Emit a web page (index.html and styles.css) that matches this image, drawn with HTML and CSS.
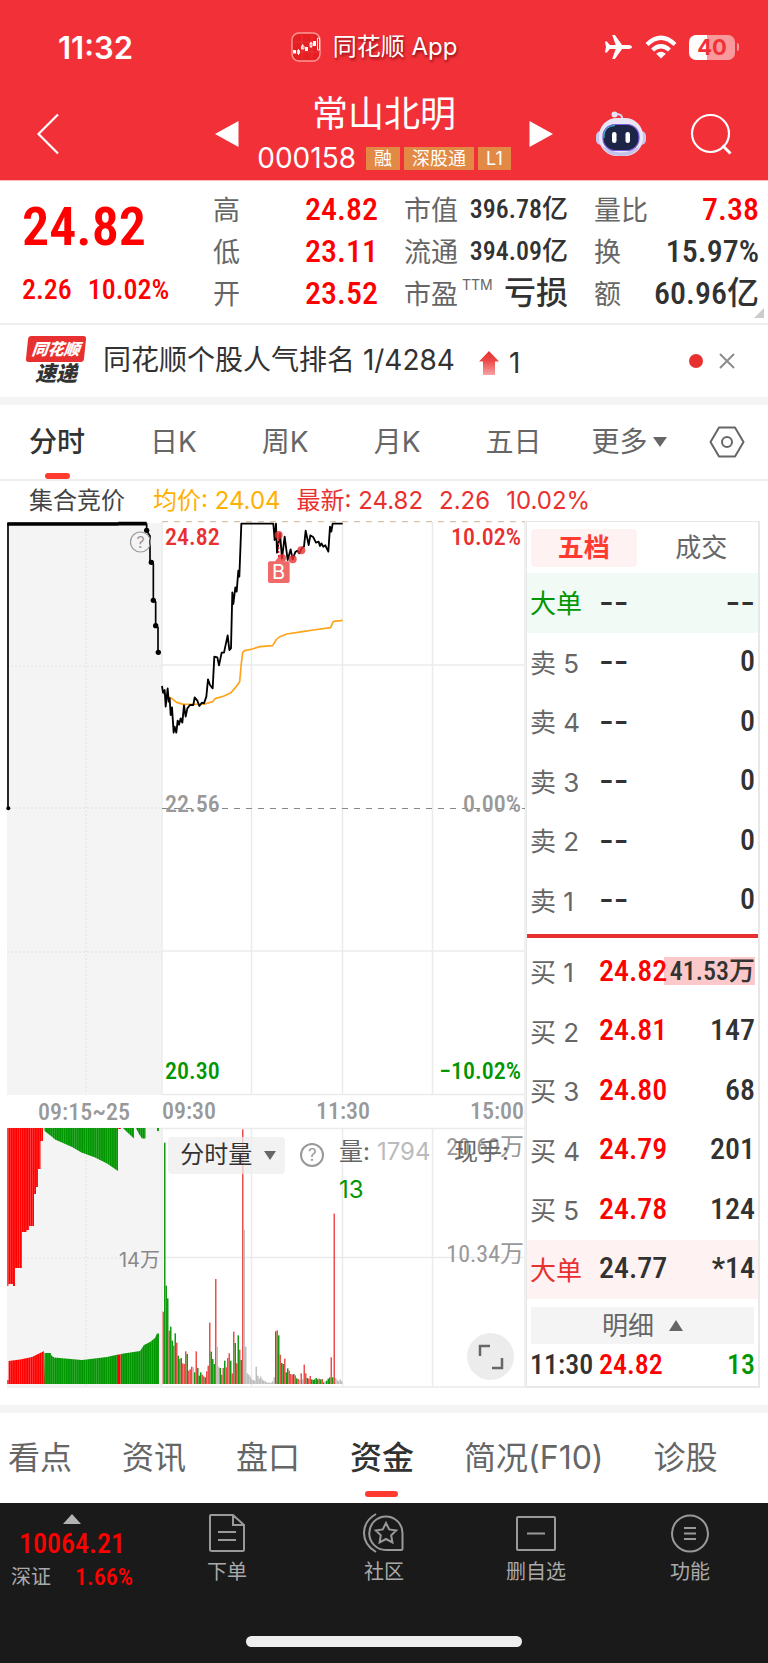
FILE: index.html
```html
<!DOCTYPE html>
<html lang="zh-CN">
<head>
<meta charset="utf-8">
<meta name="viewport" content="width=device-width, initial-scale=1">
<title>常山北明 000158</title>
<link rel="stylesheet" href="styles.css">
</head>
<body>
<header class="header">
  <div class="status">
    <time class="clock">11:32</time>
    <div class="app-tag">
      <svg class="app-icon" viewBox="0 0 30 30"><rect x="1" y="1" width="28" height="28" rx="7" fill="#e51f22" stroke="#ff9a98" stroke-width="1.4"/><path d="M1 10H29M1 20H29M11 1V29M21 1V29" stroke="#ee4446" stroke-width=".6"/><path d="M2 18h3v3.500h-3zM14 15h3v4h-3zM22 9h3v5h-3z" fill="#fff"/><path d="M6.500 18.500h2v3h-2zM7.500 17v6M10.500 14h2.500v3h-2.500zM11.700 12v5M19 11h2v3.500h-2zM20 10v6M26.500 6h2v12h-2z" fill="none" stroke="#fff" stroke-width=".9"/></svg>
      <span>同花顺 App</span>
    </div>
    <div class="signals">
      <svg class="plane" viewBox="0 0 28 26"><path fill="#fff" d="M27.500 13c0 1.300-1.800 2-3.600 2h-6.300l-7.200 10H7.700l3.500-10H5.300L2.400 18.500H.5L1.500 13 .5 7.500h1.900L5.300 11h5.900L7.700 1h2.700l7.200 10h6.300c1.800 0 3.600.7 3.600 2z"/></svg>
      <svg class="wifi" viewBox="0 0 32 24"><g fill="none" stroke="#fff" stroke-width="4.200"><path d="M2 9.500Q16-4 30 9.500"/><path d="M7.500 15q8.500-7.500 17 0"/></g><path fill="#fff" d="M16 23.500l-4.800-4.800q4.800-4 9.600 0z"/></svg>
      <span class="battery">40</span>
    </div>
  </div>
  <div class="title-bar">
    <div class="side side-left">
      <button class="icon-btn" aria-label="返回"><svg width="24" height="42" viewBox="0 0 24 42"><path d="M22 1.500L2.500 21 22 40.500" fill="none" stroke="#fff" stroke-width="2.200"/></svg></button>
      <button class="icon-btn" aria-label="上一只"><svg width="24" height="26" viewBox="0 0 24 26"><path d="M0 13L23.500 0v26z" fill="#fff"/></svg></button>
    </div>
    <div class="title">
      <h1 class="name">常山北明</h1>
      <div class="code-row"><span class="code">000158</span><span class="badge">融</span><span class="badge">深股通</span><span class="badge">L1</span></div>
    </div>
    <div class="side side-right">
      <button class="icon-btn" aria-label="下一只"><svg width="24" height="26" viewBox="0 0 24 26"><path d="M24 13L.5 0v26z" fill="#fff"/></svg></button>
      <button class="icon-btn" aria-label="智能助手"><svg width="50" height="46" viewBox="0 0 50 46"><path d="M26 9V6q-1-3-6-3" fill="none" stroke="#d9d6f0" stroke-width="2"/><circle cx="18.500" cy="3.500" r="3" fill="#e6e4f6"/><rect x="0" y="20" width="10" height="14" rx="5" fill="#c9c8ec"/><rect x="40" y="20" width="10" height="14" rx="5" fill="#c9c8ec"/><rect x="3" y="7" width="44" height="38" rx="18" fill="#e9e7f7"/><path d="M6 35q19 13 38 0-5 10-19 10T6 35z" fill="#c3c2e8"/><rect x="7" y="13.500" width="36" height="26" rx="12" fill="#1d2547" stroke="#7c5ce0" stroke-width="1.200"/><path d="M8 27V24q1-9 11-9.500" fill="none" stroke="#4bc6d8"/><rect x="16" y="21" width="4.500" height="11" rx="2.200" fill="#fff"/><rect x="29.500" y="21" width="4.500" height="11" rx="2.200" fill="#fff"/></svg></button>
      <button class="icon-btn" aria-label="搜索"><svg width="42" height="42" viewBox="0 0 42 42"><g fill="none" stroke="#fff" stroke-width="2.200"><circle cx="20.500" cy="20.500" r="18.500"/><path d="M32.500 32.500l8 8" stroke-width="3"/></g></svg></button>
    </div>
  </div>
</header>

<section class="quote">
  <div class="price-block">
    <strong class="price">24.82</strong>
    <div class="change"><span>2.26</span><span>10.02%</span></div>
  </div>
  <dl class="facts">
    <div><dt>高</dt><dd class="up">24.82</dd></div>
    <div><dt>低</dt><dd class="up">23.11</dd></div>
    <div><dt>开</dt><dd class="up">23.52</dd></div>
  </dl>
  <dl class="facts">
    <div><dt>市值</dt><dd class="small">396.78亿</dd></div>
    <div><dt>流通</dt><dd class="small">394.09亿</dd></div>
    <div><dt>市盈<span class="ttm">TTM</span></dt><dd>亏损</dd></div>
  </dl>
  <dl class="facts">
    <div><dt>量比</dt><dd class="up">7.38</dd></div>
    <div><dt>换</dt><dd>15.97%</dd></div>
    <div><dt>额</dt><dd>60.96亿</dd></div>
  </dl>
</section>

<section class="news">
  <div class="news-logo"><span class="logo-top">同花顺</span><span class="logo-bottom">速递</span></div>
  <a class="news-text" href="#rank">同花顺个股人气排名 1/4284</a>
  <svg class="arrow" width="20" height="24" viewBox="0 0 20 24"><defs><linearGradient id="fade" x2="0" y2="1"><stop stop-color="#e93030"/><stop offset=".4" stop-color="#ec4747"/><stop offset="1" stop-color="#f7a3a3"/></linearGradient></defs><path d="M10 0l10 10.500H16V24H4V10.500H0z" fill="url(#fade)"/></svg>
  <span class="news-rank">1</span>
  <span class="dot"></span>
  <button class="icon-btn" aria-label="关闭"><svg width="16" height="16" viewBox="0 0 16 16"><path d="M1 1l14 14M15 1L1 15" stroke="#8c8c8c" stroke-width="2"/></svg></button>
</section>

<nav class="periods">
  <button class="period active">分时</button>
  <button class="period">日K</button>
  <button class="period">周K</button>
  <button class="period">月K</button>
  <button class="period">五日</button>
  <button class="period more">更多<svg width="14" height="10" viewBox="0 0 14 10"><path d="M0 0h14L7 10z" fill="#666"/></svg></button>
  <button class="icon-btn settings" aria-label="设置"><svg width="36" height="32" viewBox="0 0 36 32"><g fill="none" stroke="#666" stroke-width="2"><path d="M10 1.500h16L34.500 16 26 30.500H10L1.500 16z" stroke-linejoin="round"/><circle cx="18" cy="16" r="5"/></g></svg></button>
</nav>

<div class="legend">
  <span class="auction">集合竞价</span><span class="avg">均价: 24.04</span><span class="last">最新: 24.82</span><span class="last">2.26</span><span class="last">10.02%</span>
</div>

<main class="board">
  <section class="chart">
    <svg class="plot" viewBox="0 521 526 867">
      <defs>
        <pattern id="red-bars" width="2.200" height="10" patternUnits="userSpaceOnUse"><rect width="2.200" height="10" fill="#ff5a5a"/><rect width="1.700" height="10" fill="#f00"/></pattern>
        <pattern id="green-bars" width="2.200" height="10" patternUnits="userSpaceOnUse"><rect width="2.200" height="10" fill="#4db34d"/><rect width="1.700" height="10" fill="#009600"/></pattern>
      </defs>
      <rect x="7" y="523" width="155" height="572" fill="#f4f4f4"/>
      <rect x="7" y="1128" width="155" height="258" fill="#f4f4f4"/>
      <g stroke="#e8e8e8" stroke-width="1.500" stroke-dasharray="2 2"><path d="M86 530V1095M7 666H162M7 808H162M7 952H162M86 1128V1386M7 1258H162"/></g>
      <g stroke="#ebebeb" stroke-width="1.500" fill="none"><path d="M162 522V1095M251.500 522V1094M342.500 522V1094M432.500 522V1094M525 522V1388M162 665H525M162 951H525M162 1094.500H525M7 1128.500H525M162 1129V1386M251.500 1129V1386M342.500 1129V1386M432.500 1129V1386M162 1257.500H525M7 1387H525"/></g>
      <path d="M162 521.600H525" stroke="#d9c3aa" stroke-width="1.200" stroke-dasharray="6 6"/>
      <path d="M162 808.500H525" stroke="#888" stroke-width="1.200" stroke-dasharray="6 6"/>

      <g transform="translate(0 400) scale(.33333)" fill="none" stroke-linejoin="round">
        <path d="M24 1225V371H436" stroke="#000" stroke-width="5"/>
        <path d="M22 372H355M355 371H440" stroke="#000" stroke-width="11"/>
        <path d="M440 370V392L450 408V486L460 492V600L467 606V677L474 682V757" stroke="#000" stroke-width="5"/>
        <g fill="#000"><circle cx="440" cy="391" r="8"/><circle cx="454" cy="487" r="8"/><circle cx="460" cy="601" r="8"/><circle cx="467" cy="677" r="8"/><circle cx="475" cy="757" r="8"/><circle cx="25" cy="1225" r="6"/></g>
        <path d="M489 880L505 890 515 895 530 907 550 913 615 912 638 905 645 896 672 888 693 878 706 863 719 845 724 790 728 758 734 752 757 747 780 740 818 737 828 720 838 711 860 702 908 695 940 690 992 683 998 668 1001 664 1028 661" stroke="#ffa31a" stroke-width="5"/>
        <path d="M486 858L489 878 494 870 497 920 503 865 506 905 509 895 512 945 516 922 521 998 524 980 529 998 533 962 537 974 542 955 547 968 552 916 557 950 562 925 570 915 580 915 584 892 592 902 598 918 606 908 612 910 619 890 624 838 630 855 638 865 643 770 652 772 657 796 665 758 672 758 683 706 688 750 693 745 697 577 700 612 706 562 710 575 715 512 718 530 724 371 820 371 824 420 828 371 831 458 840 400 846 475 854 410 863 480 872 448 878 478 886 456 892 452 898 460 905 445 912 440 917 392 926 435 931 406 940 412 948 428 956 425 960 438 964 430 970 440 976 436 985 455 990 380 994 395 998 371 1028 371" stroke="#000" stroke-width="5.500"/>
        <path d="M836 405V475" stroke="#e93030" stroke-width="4" stroke-dasharray="6 6"/>
        <g fill="#e93030" fill-opacity=".8"><circle cx="836" cy="405" r="12"/><circle cx="846" cy="474" r="12"/><circle cx="878" cy="478" r="12"/><circle cx="904" cy="451" r="12"/></g>
        <path d="M809 484H825L836 470 847 484H864Q869 484 869 489V544Q869 549 864 549H809Q804 549 804 544V489Q804 484 809 484z" fill="#f06a6a"/>
      </g>
      <text class="mark" x="278.500" y="579" text-anchor="middle">B</text>

      <g transform="translate(0 1070)">
        <path fill="url(#red-bars)" d="M7.300 58V216H8.500V214H13V216H15V198H22V162H26.500V160H29V156H34V124H36V117H38V99H40.500V71H43V58zM118 58h3v1h-3zM7.300 314V310H8.500V291L20 289.500 32 287 38 284 44 281 45 314z"/>
        <path fill="url(#green-bars)" d="M44.500 58V61L51 66 55 69.500 72 77 81.500 82.500 95 87.500 107 93.500 115 99 118 101V58zM123 58L128 63 134 68.500V58zM136 58L139 64 142 68.500H145.500V58zM157 58V61H159V58zM44.500 314V283H51V285L54 287.500 82 290 107 287 118 284.500V314zM120.500 314V284L127 283 140 281 144 275 150 272 155 268 157 263.500H159V314z"/>
        <rect x="118" y="284.500" width="2.500" height="29.500" fill="#f00"/>
      </g>
      <g id="volume"></g>

      <g class="num">
        <text x="165" y="545" fill="#e93030">24.82</text>
        <text x="521" y="545" fill="#e93030" text-anchor="end">10.02%</text>
        <text x="165" y="812" fill="#999">22.56</text>
        <text x="521" y="812" fill="#999" text-anchor="end">0.00%</text>
        <text x="165" y="1079" fill="#009600">20.30</text>
        <text x="521" y="1079" fill="#009600" text-anchor="end">−10.02%</text>
        <text x="84" y="1120" fill="#999" text-anchor="middle">09:15~25</text>
        <text x="162" y="1119" fill="#999">09:30</text>
        <text x="343" y="1119" fill="#999" text-anchor="middle">11:30</text>
        <text x="524" y="1119" fill="#999" text-anchor="end">15:00</text>
      </g>
      <g class="num volume-scale">
        <text x="524" y="1155" fill="#999" text-anchor="end">20.69万</text>
        <text x="524" y="1262" fill="#999" text-anchor="end">10.34万</text>
      </g>
      <text class="auction-vol" x="160" y="1267" text-anchor="end">14万</text>
      <g class="vol-text">
        <text x="339" y="1160" fill="#666">量:</text>
        <text x="377" y="1160" fill="#bbb">1794</text>
        <text x="454" y="1160" fill="#666">现手:</text>
        <text x="339" y="1198" fill="#009600">13</text>
      </g>
      <circle cx="140.500" cy="542" r="10" fill="none" stroke="#999" stroke-width="1.200"/>
      <text class="hint" x="140.500" y="548" text-anchor="middle">?</text>
    </svg>
    <div class="indicator">
      <div class="indicator-box">
        <select class="indicator-select" aria-label="副图指标"><option>分时量</option></select>
        <svg class="indicator-arrow" width="12" height="10" viewBox="0 0 12 10"><path d="M0 0h12L6 9z" fill="#666"/></svg>
      </div>
      <button class="help" aria-label="说明">?</button>
    </div>
    <button class="expand" aria-label="全屏"><svg width="26" height="26" viewBox="0 0 26 26"><path d="M2 12V2H12M24 14V24H14" fill="none" stroke="#666" stroke-width="2.500"/></svg></button>
  </section>

  <section class="book">
    <div class="book-tabs"><button class="book-tab active">五档</button><button class="book-tab">成交</button></div>
    <table class="orders">
      <tr class="big-sell"><th>大单</th><td class="none">--</td><td class="none">--</td></tr>
      <tr><th>卖 5</th><td class="none">--</td><td>0</td></tr>
      <tr><th>卖 4</th><td class="none">--</td><td>0</td></tr>
      <tr><th>卖 3</th><td class="none">--</td><td>0</td></tr>
      <tr><th>卖 2</th><td class="none">--</td><td>0</td></tr>
      <tr><th>卖 1</th><td class="none">--</td><td>0</td></tr>
    </table>
    <div class="divider"></div>
    <table class="orders">
      <tr><th>买 1</th><td class="up">24.82</td><td><span class="filled">41.53万</span></td></tr>
      <tr><th>买 2</th><td class="up">24.81</td><td>147</td></tr>
      <tr><th>买 3</th><td class="up">24.80</td><td>68</td></tr>
      <tr><th>买 4</th><td class="up">24.79</td><td>201</td></tr>
      <tr><th>买 5</th><td class="up">24.78</td><td>124</td></tr>
      <tr class="big-buy"><th>大单</th><td>24.77</td><td>*14</td></tr>
    </table>
    <button class="detail">明细<svg width="14" height="11" viewBox="0 0 14 11"><path d="M0 11h14L7 0z" fill="#666"/></svg></button>
    <table class="orders ticks">
      <tr><td>11:30</td><td class="up">24.82</td><td class="down">13</td></tr>
    </table>
  </section>
</main>

<nav class="sections">
  <a href="#view">看点</a><a href="#news">资讯</a><a href="#handicap">盘口</a><a href="#funds" class="active">资金</a><a href="#profile">简况(F10)</a><a href="#diagnose">诊股</a>
</nav>

<footer class="footer">
  <div class="toolbar">
    <button class="index">
      <svg width="18" height="10" viewBox="0 0 18 10"><path d="M0 10h18L9 0z" fill="#b3b3b3"/></svg>
      <span class="index-value">10064.21</span>
      <span class="index-row"><span>深证</span><b>1.66%</b></span>
    </button>
    <button class="tool"><svg width="40" height="40" viewBox="0 0 40 40"><path d="M4 2H26L37 12V36.500Q37 38 35.500 38H5Q3 38 3 36.500V3Q3 2 4 2zM26 2V12H37M11 19H29M11 27H29"/></svg>下单</button>
    <button class="tool"><svg width="44" height="40" viewBox="0 0 44 40"><path d="M24 3.500A16.500 16.500 0 0 0 24 37H39Q40.500 37 40.500 35.500V20A16.500 16.500 0 0 0 24 3.500zM14 1Q2 8 2 20T14 39M24 10l3.200 6.400 7 1-5 5 1.200 7L24 26l-6.400 3.400 1.200-7-5-5 7-1z"/></svg>社区</button>
    <button class="tool"><svg width="40" height="40" viewBox="0 0 40 40"><rect x="1" y="4" width="38" height="33" rx="1"/><path d="M11 20.500H29"/></svg>删自选</button>
    <button class="tool"><svg width="40" height="40" viewBox="0 0 40 40"><circle cx="20" cy="20.500" r="18"/><path d="M14 15H26M14 20.500H26M14 26H26"/></svg>功能</button>
  </div>
  <div class="home-bar"></div>
</footer>
<script src="volume.js"></script>
</body>
</html>
```
FILE: styles.css
```css
* { box-sizing: border-box; margin: 0; padding: 0; }
body { background: #fff; color: #323232; font-family: Inter, "Noto Sans CJK SC", sans-serif; }
button { background: none; border: 0; font: inherit; color: inherit; }
a { color: inherit; text-decoration: none; }
svg { display: block; }
.icon-btn { display: flex; }
.up { color: #f00; }
.down { color: #009600; }

.header { background: #f23038; color: #fff; border-bottom: 1px solid #fbb; }
.status { display: grid; grid-template-columns: 1fr auto 1fr; align-items: center; height: 94px; padding: 0 30px 0 58px; }
.clock { font-size: 31px; font-weight: 600; }
.app-tag { display: flex; align-items: center; gap: 12px; padding-right: 48px; font-size: 24px; line-height: 30px; text-shadow: 1px 2px 3px rgba(90, 0, 0, .7); }
.app-icon { width: 30px; height: 30px; }
.signals { display: flex; justify-content: flex-end; align-items: center; gap: 12px; }
.plane { width: 29px; height: 26px; }
.wifi { width: 32px; height: 24px; }
.battery { position: relative; width: 46px; height: 25px; margin-right: 3px; border-radius: 7px; background: linear-gradient(90deg, #fff 40%, #f8999c 40%); color: #f23038; font-size: 22px; font-weight: 700; line-height: 25px; text-align: center; }
.battery::after { content: ""; position: absolute; left: 48px; top: 8px; width: 2px; height: 8px; border-radius: 0 2px 2px 0; background: #f8999c; }
.title-bar { display: grid; grid-template-columns: 1fr auto 1fr; gap: 18px; height: 86px; padding: 0 36px; }
.side { display: flex; justify-content: space-between; align-items: center; height: 80px; }
.title { display: flex; flex-direction: column; align-items: center; }
.name { font-size: 36px; font-weight: 400; line-height: 40px; }
.code-row { display: flex; align-items: center; gap: 4px; height: 48px; }
.code { font-size: 28px; margin-right: 6px; }
.badge { padding: 0 8px; background: #e28a45; font-size: 18px; line-height: 23px; }

.quote { position: relative; display: grid; grid-template-columns: 165fr 165fr 164fr 165fr; column-gap: 26px; padding: 8px 9px 8px 22px; border-bottom: 2px solid #eee; }
.quote::after { content: ""; position: absolute; right: 4px; bottom: 5px; border-left: 10px solid transparent; border-bottom: 10px solid #ccc; }
.price-block { font-family: "Roboto Condensed", Roboto, "Noto Sans CJK SC", sans-serif; color: #f00; font-weight: 500; }
.price { display: block; font-size: 54px; font-weight: 600; line-height: 76px; }
.change { display: flex; gap: 16px; font-size: 28px; line-height: 50px; }
.facts { line-height: 42px; }
.facts div { display: flex; justify-content: space-between; height: 42px; }
.facts dt { font-size: 27px; line-height: 44px; color: #666; white-space: nowrap; }
.facts dd { font-family: "Roboto Condensed", Roboto, "Noto Sans CJK SC", sans-serif; font-size: 32px; font-weight: 500; white-space: nowrap; line-height: 40px; }
.facts .small { font-size: 26px; }
.ttm { font-size: 14px; vertical-align: 14px; line-height: 14px; margin-left: 4px; }

.news { display: flex; align-items: center; height: 80px; padding: 0 33px 0 25px; border-bottom: 8px solid #f4f4f4; font-size: 28px; line-height: 40px; }
.news-logo { display: flex; flex-direction: column; align-items: center; width: 62px; font-weight: 900; font-style: italic; }
.logo-top { width: 58px; border-radius: 3px; background: #e93030; color: #fff; font-size: 16px; line-height: 26px; text-align: center; transform: skewX(-6deg); }
.logo-bottom { font-size: 21px; line-height: 24px; }
.news-text { margin-left: 16px; padding-bottom: 2px; }
.arrow { margin: 4px 10px 0 24px; }
.news-rank { margin-top: 4px; }
.dot { width: 14px; height: 14px; margin: 0 16px 0 auto; border-radius: 50%; background: #e93030; }

.periods { display: flex; align-items: center; height: 76px; padding: 0 23px 0 29px; border-bottom: 2px solid #eee; font-size: 28px; color: #666; }
.period { position: relative; display: flex; align-items: center; line-height: 74px; }
.period + .period { margin-left: 65px; }
.period.active { color: #323232; font-weight: 500; }
.period.active::after { content: ""; position: absolute; left: 16px; bottom: 0; width: 25px; height: 6px; border-radius: 3px; background: #ff3b30; }
.period + .more { gap: 5px; margin-left: 50px; }
.settings { margin-left: auto; }

.legend { display: flex; gap: 16px; height: 40px; padding-left: 29px; font-size: 24px; line-height: 40px; }
.auction { margin-right: 12px; color: #444; }
.avg { color: #ffb000; }
.last { color: #e93030; }

.board { display: grid; grid-template-columns: 526fr 242fr; margin-bottom: 17px; }
.chart { position: relative; }
.plot { width: 100%; height: auto; }
.num { font-family: "Roboto Condensed", Roboto, "Noto Sans CJK SC", sans-serif; font-size: 24px; font-weight: 500; }
.volume-scale { font-weight: 400; }
.mark { font-size: 20px; fill: #fff; }
.hint { font-size: 16px; fill: #999; }
.auction-vol { font-size: 20px; fill: #888; }
.vol-text { font-size: 24px; }
.indicator { position: absolute; left: 32%; top: 71%; display: flex; align-items: center; gap: 15px; }
.indicator-box { position: relative; }
.indicator-select { display: block; appearance: none; width: 117px; height: 37px; padding-left: 12px; border: 0; border-radius: 4px; background: rgba(238, 238, 238, .75); color: #323232; font: 24px/36px Inter, "Noto Sans CJK SC", sans-serif; }
.indicator-arrow { position: absolute; right: 9px; top: 14px; pointer-events: none; }
.help { width: 24px; height: 24px; border: 2px solid #999; border-radius: 50%; color: #999; font-size: 17px; line-height: 20px; }
.expand { position: absolute; right: 12px; bottom: 8px; display: grid; place-items: center; width: 47px; height: 47px; border-radius: 50%; background: #ececec; }

.book { display: flex; flex-direction: column; margin-right: 8px; border: 1px solid #e8e8e8; border-width: 1px 2px 2px 1px; }
.book-tabs { display: grid; grid-template-columns: 1fr 1fr; align-items: center; gap: 12px; height: 51px; padding: 0 4px; font-size: 26px; color: #666; }
.book-tab { height: 38px; line-height: 36px; border-radius: 4px; }
.book-tab.active { background: #fff2f2; color: #ff3b30; font-weight: 700; }
.orders { width: 100%; height: 357px; border-collapse: collapse; table-layout: fixed; font-family: "Roboto Condensed", Roboto, "Noto Sans CJK SC", sans-serif; font-size: 30px; font-weight: 500; line-height: 36px; white-space: nowrap; }
.orders th, .orders td { padding-bottom: 2px; }
.orders th { width: 72px; padding-left: 3px; font: 26px Inter, "Noto Sans CJK SC", sans-serif; color: #666; text-align: left; }
.orders td:nth-child(2) { width: 65px; }
.orders td:last-child { padding-right: 3px; text-align: right; }
.orders .none { font-family: Inter, sans-serif; font-size: 32px; }
.big-sell { background: #f2faf6; }
.big-buy { background: #fff2f2; }
.orders .big-sell th { color: #009600; }
.orders .big-buy th { color: #e93030; }
.filled { display: block; background: linear-gradient(#fbc9c9, #fbc9c9) 0 center / 100% 28px no-repeat; font-size: 26px; }
.divider { height: 4px; margin: 4px 0; background: #e93030; }
.detail { display: flex; justify-content: center; align-items: center; gap: 15px; height: 37px; margin: 8px 4px 0; background: #f4f4f4; font-size: 26px; line-height: 37px; color: #666; }
.ticks { flex: 1; height: 40px; font-size: 28px; }
.orders.ticks td { padding-bottom: 0; }
.ticks td:first-child { width: 72px; padding-left: 3px; }

.sections { display: flex; gap: 50px; height: 98px; padding-left: 8px; border-top: 8px solid #f4f4f4; font-size: 32px; line-height: 90px; color: #666; white-space: nowrap; }
.sections a { position: relative; }
.sections .active { color: #323232; font-weight: 500; }
.sections .active::after { content: ""; position: absolute; left: 15px; bottom: 6px; width: 33px; height: 6px; border-radius: 3px; background: #ff3b30; }

.footer { background: #1a1a1a; padding-bottom: 16px; }
.toolbar { display: grid; grid-template-columns: 146fr 162fr 152fr 152fr 156fr; height: 133px; }
.index { display: flex; flex-direction: column; align-items: center; padding: 11px 2px 0 0; color: #f00; font-family: "Roboto Condensed", Roboto, "Noto Sans CJK SC", sans-serif; }
.index-value { font-size: 28px; font-weight: 500; line-height: 40px; }
.index-row { display: flex; gap: 24px; font-size: 24px; line-height: 26px; }
.index-row span { color: #aaa; font-size: 20px; }
.index-row b { font-weight: 500; }
.tool { display: flex; flex-direction: column; align-items: center; gap: 6px; padding-top: 10px; color: #aaa; font-size: 20px; line-height: 26px; }
.tool svg { fill: none; stroke: #999; stroke-width: 2; }
.home-bar { width: 36%; height: 11px; margin: 0 auto; border-radius: 6px; background: #eee; }
```
FILE: volume.js
```js
// Minute volume: colour key followed by bar height in thirds of a chart unit.
const minutes = `r217 g724 g295 g257 r160 g172 g130 r115 g152 r124 g85 r75 g78 r62 r60 r98 g90 r40 r44 r52
n50 g35 r98 g48 g25 g35 r28 r23 g20 r38 r55 r184 g97 g75 g60 r315 n112 n52 g48 r28
r48 g70 r50 r78 r92 g70 r32 r157 g123 r62 g146 r103 g72 r764 n463 n112 n32 n28 n22 n14
n12 n10 n52 n25 n16 n22 n14 n10 n8 n5 n4 n4 n4 n8 n20 g158 r161 g146 r88 g63
g60 r76 g35 g47 r40 r30 r28 g30 r26 g17 r15 n12 r32 n14 r58 r32 g18 r16 r24 g14
g12 g14 g18 g14 r16 g14 r15 g5 n8 g10 g16 g20 r80 g20 r511 n18 n12 n8 n14 n8`.split(/\s+/);
const colours = { r: "#ee4d4d", g: "#139a13", n: "#bfbfbf" };
const group = document.getElementById("volume");
minutes.forEach((entry, i) => {
  const bar = document.createElementNS("http://www.w3.org/2000/svg", "rect");
  const height = Number(entry.slice(1)) / 3;
  bar.setAttribute("x", 162.5 + i * 1.5);
  bar.setAttribute("y", 1384 - height);
  bar.setAttribute("width", 1.5);
  bar.setAttribute("height", height);
  bar.setAttribute("fill", colours[entry[0]]);
  group.append(bar);
});
```
